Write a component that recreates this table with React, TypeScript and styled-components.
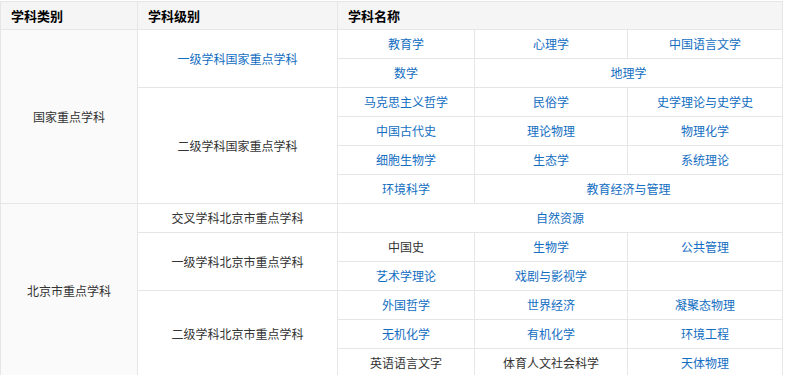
import styled, { createGlobalStyle } from "styled-components";

const GlobalStyle = createGlobalStyle`
  body {
    margin: 0;
    padding-top: 1px;
    background: #fff;
    font-family: "Microsoft YaHei", "Noto Sans CJK SC", "Liberation Sans", sans-serif;
  }
`;

const Table = styled.table`
  border-collapse: collapse;
  table-layout: fixed;
  width: 782px;
  font-size: 12px;
  color: #333;
`;

const Head = styled.th`
  background: #f5f5f5;
  border: 1px solid #e6e6e6;
  height: 27px;
  padding: 0 10px;
  text-align: left;
  font-size: 13px;
  font-weight: bold;
  color: #000;
`;

const Cell = styled.td<{ $link?: boolean; $shade?: boolean }>`
  border: 1px solid #e6e6e6;
  height: 28px;
  padding: 0 6px;
  text-align: center;
  vertical-align: middle;
  line-height: 18px;
  white-space: nowrap;
  color: ${(p) => (p.$link ? "#136ec2" : "#333")};
  background: ${(p) => (p.$shade ? "#fafafa" : "#fff")};
`;

function App() {
  return (
    <>
      <GlobalStyle />
      <Table>
        <colgroup>
          <col style={{ width: 137 }} />
          <col style={{ width: 200 }} />
          <col style={{ width: 137 }} />
          <col style={{ width: 153 }} />
          <col style={{ width: 155 }} />
        </colgroup>
        <thead>
          <tr>
            <Head>学科类别</Head>
            <Head>学科级别</Head>
            <Head colSpan={3}>学科名称</Head>
          </tr>
        </thead>
        <tbody>
          <tr>
            <Cell rowSpan={6} $shade>国家重点学科</Cell>
            <Cell rowSpan={2} $link>一级学科国家重点学科</Cell>
            <Cell $link>教育学</Cell>
            <Cell $link>心理学</Cell>
            <Cell $link>中国语言文学</Cell>
          </tr>
          <tr>
            <Cell $link>数学</Cell>
            <Cell colSpan={2} $link>地理学</Cell>
          </tr>
          <tr>
            <Cell rowSpan={4}>二级学科国家重点学科</Cell>
            <Cell $link>马克思主义哲学</Cell>
            <Cell $link>民俗学</Cell>
            <Cell $link>史学理论与史学史</Cell>
          </tr>
          <tr>
            <Cell $link>中国古代史</Cell>
            <Cell $link>理论物理</Cell>
            <Cell $link>物理化学</Cell>
          </tr>
          <tr>
            <Cell $link>细胞生物学</Cell>
            <Cell $link>生态学</Cell>
            <Cell $link>系统理论</Cell>
          </tr>
          <tr>
            <Cell $link>环境科学</Cell>
            <Cell colSpan={2} $link>教育经济与管理</Cell>
          </tr>
          <tr>
            <Cell rowSpan={6} $shade>北京市重点学科</Cell>
            <Cell>交叉学科北京市重点学科</Cell>
            <Cell colSpan={3} $link>自然资源</Cell>
          </tr>
          <tr>
            <Cell rowSpan={2}>一级学科北京市重点学科</Cell>
            <Cell>中国史</Cell>
            <Cell $link>生物学</Cell>
            <Cell $link>公共管理</Cell>
          </tr>
          <tr>
            <Cell $link>艺术学理论</Cell>
            <Cell $link>戏剧与影视学</Cell>
            <Cell></Cell>
          </tr>
          <tr>
            <Cell rowSpan={3}>二级学科北京市重点学科</Cell>
            <Cell $link>外国哲学</Cell>
            <Cell $link>世界经济</Cell>
            <Cell $link>凝聚态物理</Cell>
          </tr>
          <tr>
            <Cell $link>无机化学</Cell>
            <Cell $link>有机化学</Cell>
            <Cell $link>环境工程</Cell>
          </tr>
          <tr>
            <Cell>英语语言文字</Cell>
            <Cell>体育人文社会科学</Cell>
            <Cell $link>天体物理</Cell>
          </tr>
        </tbody>
      </Table>
    </>
  );
}

export default App;
